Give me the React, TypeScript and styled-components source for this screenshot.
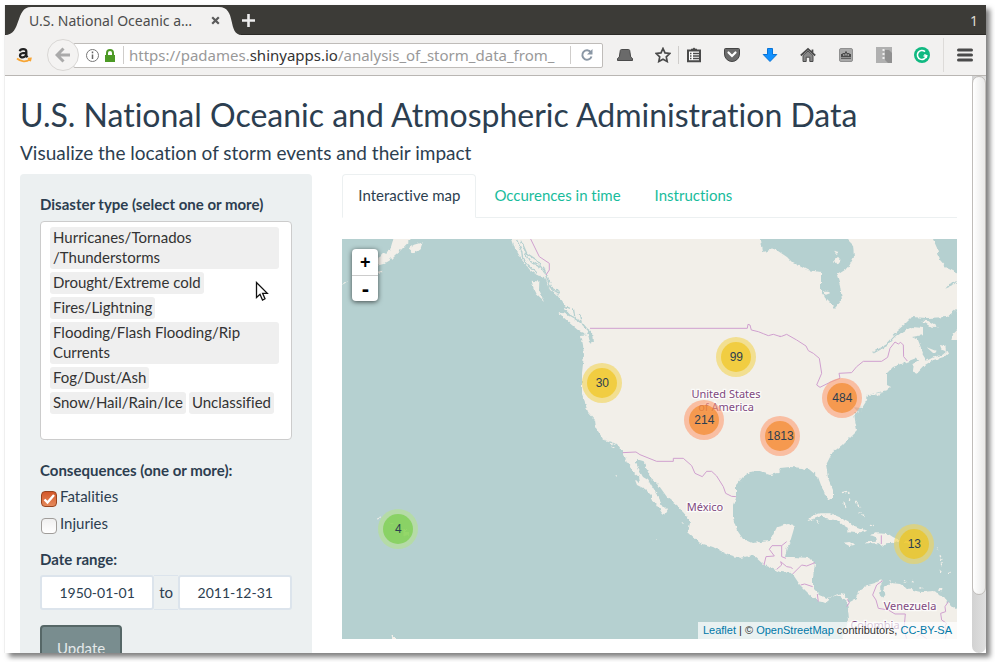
import React, { useState } from "react";
import styled, { createGlobalStyle, css } from "styled-components";

const GlobalStyle = createGlobalStyle`
  * { box-sizing: border-box; }
  body { margin: 0; background: #fff; color: #2c3e50; font: 15px/21px Lato, sans-serif; font-variant-ligatures: none; overflow: hidden; }
  button, input { font: inherit; color: inherit; margin: 0; }
`;

/* ---------- browser frame ---------- */

const Desktop = styled.div`
  display: flex;
  height: 100vh;
  padding: 5px 9px 9px 5px;
`;

const BrowserWindow = styled.div`
  display: flex;
  flex-direction: column;
  flex: 1;
  min-width: 0;
  background: #fff;
  box-shadow: 4px 4px 5px rgba(0, 0, 0, 0.5), -1px 0 0 #f4f4f4;
`;

const TitleBar = styled.header`
  display: flex;
  align-items: stretch;
  height: 30px;
  flex: none;
  background: #3c3b37;
  border-bottom: 1px solid #2b2a27;
  font-family: "Noto Sans", sans-serif;
`;

const BrowserTab = styled.div`
  position: relative;
  display: flex;
  align-items: center;
  width: 237px;
  padding: 2px 22px 0 24px;
  font-size: 14px;
  color: #4c4c4c;
`;

const TabShape = styled.svg`
  position: absolute;
  left: 0;
  top: 0;
`;

const TabTitle = styled.span`
  position: relative;
  flex: 1;
  white-space: nowrap;
`;

const PlainButton = styled.button`
  position: relative;
  display: flex;
  align-items: center;
  justify-content: center;
  padding: 0;
  border: 0;
  background: none;
`;

const TabCount = styled.span`
  margin-left: auto;
  padding: 5px 8px 0 0;
  color: #dfdbd2;
  font-size: 14px;
`;

const Toolbar = styled.nav`
  display: flex;
  align-items: center;
  flex: none;
  height: 41px;
  padding: 0 13px 0 11px;
  background: #f2f1f0;
  border-bottom: 1px solid #b9b6b3;
`;

const BackButton = styled(PlainButton)`
  z-index: 1;
  width: 32px;
  height: 32px;
  margin: 0 -6px 0 15px;
  border: 1px solid #d9d7d5;
  border-radius: 50%;
  background: #f4f3f2;
`;

const AddressBar = styled.div`
  display: flex;
  align-items: center;
  flex: 1;
  min-width: 0;
  height: 25px;
  padding: 0 8px 0 12px;
  background: #fff;
  border: 1px solid #bfbcb9;
  border-radius: 2px;
  font-family: "Noto Sans", sans-serif;
`;

const Url = styled.span`
  flex: 1;
  min-width: 0;
  overflow: hidden;
  white-space: nowrap;
  color: #999;
`;

const UrlHost = styled.span`
  color: #333;
`;

const Divider = styled.span<{ $tall?: boolean; $gap: number }>`
  flex: none;
  width: 1px;
  height: ${(p) => (p.$tall ? 34 : 18)}px;
  margin: 0 ${(p) => p.$gap}px;
  background: ${(p) => (p.$tall ? "#dddbd9" : "#cfcdcb")};
`;

const IconGroup = styled.div<{ $first?: boolean }>`
  display: flex;
  align-items: center;
  gap: 22px;
  margin-left: ${(p) => (p.$first ? 14 : 0)}px;
`;

const Viewport = styled.div`
  display: flex;
  flex: 1;
  min-height: 0;
`;

const ScrollTrack = styled.div`
  width: 14px;
  flex: none;
  background: linear-gradient(90deg, #d2d2d2, #e0e0e0);
  border-radius: 0 0 7px 7px;
`;

const ScrollThumb = styled.div`
  height: 90%;
  border: 1px solid #c0bdba;
  border-radius: 7px;
  background: linear-gradient(90deg, #fff, #e9e9e8);
`;

/* ---------- page ---------- */

const Page = styled.main`
  flex: 1;
  min-width: 0;
  overflow: hidden;
`;

const Title = styled.h2`
  margin: 21px 15px 10px;
  font-size: 32px;
  line-height: 35px;
  font-weight: 400;
`;

const Subtitle = styled.h4`
  margin: 0 15px 11px;
  font-size: 19px;
  line-height: 21px;
  font-weight: 400;
`;

const Columns = styled.div`
  display: grid;
  grid-template-columns: minmax(0, 1fr) minmax(0, 2fr);
`;

const Column = styled.section`
  padding: 0 15px;
`;

const Well = styled.form`
  padding: 20px;
  background: #ecf0f1;
  border-radius: 4px;
`;

const fieldTitle = css`
  display: block;
  padding: 0;
  font-weight: 700;
  line-height: 21px;
`;

const FieldLabel = styled.label`
  ${fieldTitle}
`;

const FieldLegend = styled.legend`
  ${fieldTitle}
  margin-bottom: 5px;
`;

const ChipBox = styled.div`
  display: flex;
  flex-wrap: wrap;
  gap: 3px;
  margin: 6px 0 20px;
  padding: 5px 12px 4px 9px;
  background: #fff;
  border: 1px solid #ccc;
  border-radius: 4px;
`;

const Chip = styled.span`
  max-width: 100%;
  padding: 0 3px 2px;
  line-height: 20px;
  color: #333;
  background: #efefef;
  border-radius: 3px;
`;

const ChipInput = styled.input`
  width: 100%;
  height: 18px;
  padding: 0;
  border: 0;
  outline: 0;
  background: none;
`;

const CheckGroup = styled.fieldset`
  display: flex;
  flex-direction: column;
  gap: 6px;
  margin: 0 0 15px;
  padding: 0;
  border: 0;
`;

const CheckLabel = styled.label`
  display: flex;
  gap: 3px;
  padding-left: 1px;
  height: 21px;
`;

const CheckBox = styled.input`
  appearance: none;
  width: 16px;
  height: 16px;
  margin-top: 5px;
  border: 1px solid #a09d9a;
  border-radius: 4px;
  background: linear-gradient(#f0f0f0, #fff);

  &:checked {
    border-color: #98441f;
    background:
      url("data:image/svg+xml,%3Csvg xmlns='http://www.w3.org/2000/svg' viewBox='0 0 14 14'%3E%3Cpath d='M2.5 7.5 5.5 10.5 12 3' fill='none' stroke='white' stroke-width='2.4'/%3E%3C/svg%3E"),
      linear-gradient(#d3582a, #e58a5c);
  }
`;

const DateRange = styled.div`
  display: flex;
  margin: 5px 0 15px;
`;

const DateInput = styled.input`
  flex: 1;
  min-width: 0;
  height: 35px;
  padding: 0 9px;
  border: 2px solid #dce4ec;
  border-radius: 3px;
  background: #fff;
  font-size: 14px;
  text-align: center;
`;

const DateJoin = styled.span`
  width: 24px;
  line-height: 33px;
  text-align: center;
  border: solid #dce4ec;
  border-width: 1px 0;
`;

const UpdateButton = styled.button`
  padding: 11px 15px;
  border: 2px solid #566767;
  border-radius: 4px;
  background: #798d8f;
  color: #e4e8e9;
  line-height: 21px;
`;

const TabList = styled.div`
  display: flex;
  gap: 2px;
  margin-bottom: 21px;
  border-bottom: 1px solid #ecf0f1;
`;

const PageTab = styled.button<{ $active: boolean }>`
  margin-bottom: -1px;
  padding: 10px 15px 11px;
  border: 1px solid ${(p) => (p.$active ? "#ecf0f1" : "transparent")};
  border-bottom-color: ${(p) => (p.$active ? "#fff" : "transparent")};
  border-radius: 4px 4px 0 0;
  background: ${(p) => (p.$active ? "#fff" : "none")};
  color: ${(p) => (p.$active ? "#2c3e50" : "#18bc9c")};
  line-height: 21px;
`;

/* ---------- map ---------- */

const MapFrame = styled.div`
  position: relative;
  height: 400px;
  overflow: hidden;
  background: #b5d0d0;
  font-family: "Liberation Sans", sans-serif;
`;

const MapCanvas = styled.svg`
  display: block;
  width: 100%;
  height: 100%;
`;

const ZoomControl = styled.div`
  position: absolute;
  left: 10px;
  top: 10px;
  width: 26px;
  border-radius: 4px;
  background: #fff;
  box-shadow: 0 1px 5px rgba(0, 0, 0, 0.65);
`;

const ZoomButton = styled.button`
  display: block;
  width: 26px;
  height: 26px;
  padding: 0;
  border: 0;
  background: none;
  color: #000;
  font: bold 18px/26px "Liberation Sans", sans-serif;

  & + & {
    border-top: 1px solid #ccc;
    font-size: 22px;
    line-height: 24px;
  }
`;

const clusterTones = {
  small: ["rgba(181, 226, 140, 0.6)", "rgba(110, 204, 57, 0.6)"],
  medium: ["rgba(241, 211, 87, 0.6)", "rgba(240, 194, 12, 0.6)"],
  large: ["rgba(253, 156, 115, 0.6)", "rgba(241, 128, 23, 0.6)"],
};

type Tone = keyof typeof clusterTones;

const Cluster = styled.button<{ $x: number; $y: number; $tone: Tone }>`
  position: absolute;
  left: ${(p) => p.$x}px;
  top: ${(p) => p.$y}px;
  width: 40px;
  height: 40px;
  margin: -20px 0 0 -20px;
  padding: 5px;
  border: 0;
  border-radius: 50%;
  background: ${(p) => clusterTones[p.$tone][0]};
  font: 12px/30px "Liberation Sans", sans-serif;
`;

const ClusterCore = styled.span<{ $tone: Tone }>`
  display: flex;
  justify-content: center;
  height: 30px;
  border-radius: 50%;
  background: ${(p) => clusterTones[p.$tone][1]};
`;

const Attribution = styled.div`
  position: absolute;
  right: 0;
  bottom: 0;
  padding: 0 5px;
  background: rgba(255, 255, 255, 0.7);
  color: #333;
  font-size: 11px;
  line-height: 17px;
  white-space: nowrap;

  a { color: #0078a8; text-decoration: none; }
`;

const Pointer = styled.svg`
  position: absolute;
  left: 255px;
  top: 281px;
  pointer-events: none;
`;

const clusters: { count: number; x: number; y: number; tone: Tone }[] = [
  { count: 99, x: 394, y: 118, tone: "medium" },
  { count: 30, x: 260, y: 144, tone: "medium" },
  { count: 484, x: 500, y: 159, tone: "large" },
  { count: 214, x: 362, y: 181, tone: "large" },
  { count: 1813, x: 438, y: 197, tone: "large" },
  { count: 4, x: 56, y: 290, tone: "small" },
  { count: 13, x: 572, y: 305, tone: "medium" },
];

const disasterTypes = [
  "Hurricanes/Tornados /Thunderstorms",
  "Drought/Extreme cold",
  "Fires/Lightning",
  "Flooding/Flash Flooding/Rip Currents",
  "Fog/Dust/Ash",
  "Snow/Hail/Rain/Ice",
  "Unclassified",
];

const mainland =
  "M165 -10 170 0 173 9 180 21 188 31 195 36 203 38 206 46 208 51 215 56 220 63 223 69 231 78 240 83 245 89 250 93 251 103 248 101 246 95 239 96 241 106 242 116 240 134 240 144 240 156 243 164 246 173 253 181 254 189 261 200 270 203 276 206 281 213 285 223 291 233 297 238 298 244 293 241 295 246 303 250 309 256 309 261 315 266 320 274 322 276 325 271 320 266 315 256 310 248 306 241 301 238 297 231 294 224 294 220 301 222 304 228 308 238 315 244 320 251 325 258 335 266 345 278 348 284 346 293 358 304 371 308 385 315 398 319 411 316 421 325 431 330 438 333 450 334 458 346 466 354 475 362 485 364 486 359 496 356 505 363 506 371 507 381 503 391 501 400 499 410 625 410 625 376 615 371 605 363 600 356 591 352 580 353 575 352 565 349 558 345 550 344 542 348 541 354 538 349 541 341 533 344 526 346 518 351 515 359 508 363 500 354 493 356 485 359 478 356 471 349 471 338 473 324 468 319 451 318 443 318 445 309 448 303 451 293 453 286 446 285 435 288 432 294 428 302 410 304 401 300 395 291 391 279 391 266 394 258 394 246 401 238 408 233 416 232 428 236 436 234 438 229 448 228 460 229 468 231 476 238 479 246 483 256 488 262 491 259 491 251 486 239 484 226 490 214 500 206 508 198 515 191 513 181 512 173 518 176 520 169 525 161 526 156 545 151 549 148 545 146 545 134 551 128 565 123 578 118 581 114 576 101 570 98 581 96 581 89 570 88 556 95 546 106 558 91 565 83 570 78 585 79 605 78 615 70 625 62 625 38 615 34 605 29 598 21 595 9 591 0 588 -10Z";

const hudsonBay =
  "M418 -10 419 0 421 13 433 10 445 18 450 23 465 31 479 33 479 53 485 61 493 69 500 61 498 46 495 36 506 29 512 18 511 6 505 0 500 -10Z";

/* Tile sheets: each is drawn on a grid three units to a pixel. */
const westSheet = "translate(-2 -9) scale(.3333)";
const plainsSheet = "translate(198 -9) scale(.3333)";
const eastSheet = "translate(418 -9) scale(.3333)";
const mexicoSheet = "translate(198 191) scale(.3333)";
const caribbeanSheet = "translate(418 191) scale(.3333)";

function Basemap() {
  return (
    <MapCanvas viewBox="0 0 615 400" preserveAspectRatio="xMinYMin slice" role="img" aria-label="Map of North America">
      <defs>
        <filter id="coast" filterUnits="userSpaceOnUse" x="-10" y="-10" width="635" height="420" colorInterpolationFilters="sRGB">
          <feTurbulence type="fractalNoise" baseFrequency=".22" numOctaves="2" seed="4" result="n" />
          <feDisplacementMap in="SourceGraphic" in2="n" scale="4" xChannelSelector="R" yChannelSelector="G" />
        </filter>
      </defs>
      <g filter="url(#coast)" fill="#f2efe9">
        <rect x="-10" y="-10" width="635" height="420" fill="#b5d0d0" />
        <path d={mainland} />
        <path d={hudsonBay} fill="#b5d0d0" />
        <g transform={westSheet}>
          <path d="M172 5H235L216 27 200 42 183 60 165 75 148 92 130 102 112 107 115 80 150 60 160 27ZM206 55 222 44 248 37 242 55 222 70ZM575 152 598 155 597 182 612 213 590 192 580 172ZM5 165 15 155 25 150 15 160ZM108 125 128 122 120 132ZM656 248 660 246V254Z" />
          <path d="M530 30 545 62 548 85 565 105 592 130M545 35 560 70 590 90 615 130M555 68 565 90 600 112M620 145 635 178 655 192" fill="none" stroke="#b5d0d0" strokeWidth="4" />
        </g>
        <g transform={plainsSheet}>
          <path d="M56 248 72 250 98 264 122 280 145 304 140 314 118 304 92 282Z" />
          <path d="M10 110 22 140 30 160M20 165 45 180M40 195 60 215M52 180 60 200M65 225 90 235M100 235 105 265M118 250 124 280M148 300 152 340" fill="none" stroke="#b5d0d0" strokeWidth="4" />
          <path d="M188 628 206 632M210 640 220 642M214 650 224 654" stroke="#f2efe9" strokeWidth="3" />
        </g>
        <g transform={eastSheet}>
          <path d="M458 402 480 390 500 392 520 382 548 374 562 362 566 368 552 382 520 390 496 404 472 430 456 424ZM482 364 500 392 484 396 470 386ZM484 272 505 273 534 291 512 290ZM540 345 556 348 558 360 544 356ZM500 352 530 364 520 370ZM574 330 580 312 600 292V330ZM188 182 205 182 210 190 198 194ZM222 92 234 80 242 90 230 104ZM222 62 236 66 230 72ZM325 494 372 486 350 496Z" />
          <path d="M430 300 402 322 380 346 340 368M448 275 420 298 400 316" fill="none" stroke="#b5d0d0" strokeWidth="5" />
          <path d="M556 176 568 162 592 152 580 166ZM284 532 296 545 290 560 304 556 306 534Z" fill="#b5d0d0" />
        </g>
        <g transform={caribbeanSheet}>
          <path d="M142 274 158 256 182 250 210 250 236 260 262 272 284 288 322 302 302 310 262 307 268 296 250 286 230 270 200 268 184 258 160 268ZM330 314 350 310 385 312 400 322 418 330 402 338 378 340 368 350 356 340 316 340 318 334 348 332 345 320ZM250 338 268 336 286 344 268 348ZM435 332 462 332 460 342 436 342ZM168 274 178 274 176 282ZM250 212 258 228 260 238 252 228ZM538 474 548 474 546 484 534 482Z" />
          <path d="M246 188 262 184 270 192M268 205 270 215M286 216 300 232M296 248 314 260M330 290 342 286M532 350 536 362M540 376 546 390M544 400 546 412M540 422 546 430M566 430 572 430M388 452 392 454M430 454 440 458M456 454 464 458M478 474 490 474" fill="none" stroke="#f2efe9" strokeWidth="4" strokeDasharray="6 4" />
          <path d="M366 476 374 484 376 496 366 502 358 494Z" fill="#b5d0d0" />
        </g>
        <g transform={mexicoSheet}>
          <path d="M226 136 231 136 230 141ZM350 328 354 332 349 332ZM424 278 432 276 430 282Z" />
        </g>
        <path d="M35 280 39 279M48 283 51 284M62 290 67 295 62 298ZM50 396 54 400H51Z" stroke="#f2efe9" />
      </g>
      <g fill="none" stroke="#d0a0cf" strokeWidth="3">
        <path transform={westSheet} d="M572 27 598 80 628 100V120L618 135" />
        <path transform={plainsSheet} d="M150 295H622L624 283 630 285 634 300 655 305 670 311 685 317 700 313 722 320" />
        <path transform={eastSheet} d="M58 319 65 319 80 313 110 330 138 348 145 362 160 370 178 385 185 430 170 465 180 472 210 457 240 445 237 430 275 428 290 410 310 394H365L383 382 390 355 405 336 415 342 422 337 430 345 431 380 442 393" />
        <path transform={mexicoSheet} d="M248 68 288 66 300 74 350 94H400V85H430L455 107 465 130 487 140 500 124H515L530 138 550 170 557 190 575 199 588 200" />
        <g transform={caribbeanSheet}>
          <path d="M12 405 18 380 43 378 28 358 36 347H65V380L78 385M65 347 80 335M50 418 65 405 62 395 80 410 92 412 98 416M98 432 125 405 140 408 165 398M122 465 134 462 158 470M172 492 175 515M262 508 268 518 260 530M364 316V342" />
          <path d="M368 452 350 465 338 495 348 510 355 535 385 540 405 552H436L432 600 440 626M565 515 555 530 557 545 542 550 545 570 560 580 555 590 560 610 556 626M470 620 480 612 500 626" />
        </g>
      </g>
      <g
        fill="#80487f"
        stroke="#fff"
        strokeWidth="2.5"
        strokeOpacity=".75"
        paintOrder="stroke"
        textAnchor="middle"
        fontFamily="Noto Sans, sans-serif"
        fontSize="11"
      >
        <text x="384" y="159">United States</text>
        <text x="384" y="172">of America</text>
        <text x="363" y="272">México</text>
        <text x="568" y="371">Venezuela</text>
        <text x="533" y="390">Colombia</text>
      </g>
    </MapCanvas>
  );
}

/* ---------- toolbar icons ---------- */

const iconPaths: Record<string, React.ReactNode> = {
  Privacy: <path d="M4.500 2.500h7q1 0 1.200 1l1 6.500 1.800 1.500v2H.5v-2L2.300 10l1-6.500q.2-1 1.200-1Z" fill="#6a6a6a" stroke="#4a4a4a" />,
  Bookmark: <path d="m8 1.500 2 4.400 4.800.6-3.500 3.300.9 4.700L8 12.200l-4.200 2.300.9-4.700L1.200 6.500 6 5.900Z" fill="none" stroke="#4a4a4a" strokeWidth="1.700" />,
  Library: (
    <>
      <path d="M2 3.500h12v10.700H2Z" fill="#fff" stroke="#4a4a4a" strokeWidth="2" />
      <path d="M5 4V1.800h1.500L8 .5l1.500 1.300H11V4Z" fill="#4a4a4a" />
      <path d="M4 6.500h1.500M7 6.500h6M4 9h1.500M7 9h6M4 11.500h1.500M7 11.500h6" stroke="#4a4a4a" strokeWidth="1.300" />
    </>
  ),
  Pocket: (
    <>
      <path d="M1.500 1.500h13q1 0 1 1V7a7.500 7.500 0 0 1-15 0V2.500q0-1 1-1Z" fill="#6a6a6a" stroke="#444" />
      <path d="m4.500 5.500 3.500 3.500 3.500-3.500" fill="none" stroke="#fff" strokeWidth="2.200" strokeLinecap="round" />
    </>
  ),
  Downloads: <path d="M5.500 1.500h5v6h4.300L8 14.500 1.200 7.500h4.300Z" fill="#1191ff" stroke="#0873d6" />,
  Home: (
    <>
      <path d="M3 8.500 8 4l5 4.500v6H9.800v-4.300H6.200v4.300H3Z" fill="#888" stroke="#4a4a4a" />
      <path d="M.8 8.500 8 2l7.200 6.500M12.500 2.500v3" fill="none" stroke="#4a4a4a" strokeWidth="1.700" />
    </>
  ),
  Capture: (
    <>
      <rect x="1.500" y="1.500" width="13" height="13" rx="1.500" fill="#a8a8a8" stroke="#909090" />
      <path d="M7 4.500h2V6h2.500v1H13v3H3V7h1.500V6H7ZM3 10.800h10v1H3Z" fill="#4a4a4a" />
      <path d="M5 8h1.500M9.500 8H11M8 6.500v2" stroke="#ddd" />
    </>
  ),
  Archive: (
    <>
      <path d="M0 0h16v16H0Z" fill="#b0b0b0" />
      <path d="M9 3h4l3 3v10h-4l-3-3Z" fill="#909090" />
      <path d="M7.500 2v12" stroke="#eee" strokeWidth="2" strokeDasharray="2 2" />
    </>
  ),
  Grammar: (
    <>
      <circle cx="8" cy="8" r="8" fill="#10b981" />
      <path d="M11 4.700A4.500 4.500 0 1 0 12.300 9H9.500" fill="none" stroke="#fff" strokeWidth="1.600" />
      <path d="m10.300 7.500 2.500 1.200-.5 2.500" fill="none" stroke="#fff" strokeWidth="1.300" />
    </>
  ),
  Menu: <path d="M1.500 3h13M1.500 8h13M1.500 13h13" stroke="#4a4a4a" strokeWidth="3" strokeLinecap="round" />,
};

function ToolIcon({ name }: { name: string }) {
  return (
    <PlainButton aria-label={name}>
      <svg width="16" height="16" viewBox="0 0 16 16">{iconPaths[name]}</svg>
    </PlainButton>
  );
}

export default function App() {
  const [tab, setTab] = useState("Interactive map");
  return (
    <Desktop>
      <GlobalStyle />
      <BrowserWindow>
        <TitleBar>
          <BrowserTab>
            <TabShape width="237" height="30" viewBox="0 0 237 30" aria-hidden="true">
              <path d="M0 30C17 30 10 2 26 2H214C232 2 222 30 237 30Z" fill="#f2f1f0" />
            </TabShape>
            <TabTitle>U.S. National Oceanic a…</TabTitle>
            <PlainButton aria-label="Close tab">
              <svg width="9" height="9" viewBox="0 0 9 9">
                <path d="m1.200 1.200 6.600 6.600M7.800 1.200 1.200 7.800" stroke="#5a5a5a" strokeWidth="2.200" />
              </svg>
            </PlainButton>
          </BrowserTab>
          <PlainButton aria-label="New tab">
            <svg width="13" height="15" viewBox="0 0 13 15">
              <path d="M6.500 2v13M0 8.500h13" stroke="#eee" strokeWidth="2.600" />
            </svg>
          </PlainButton>
          <TabCount>1</TabCount>
        </TitleBar>

        <Toolbar>
          <PlainButton aria-label="Amazon">
            <svg width="16" height="18" viewBox="0 0 16 18">
              <path d="M3.800 5.300C4.300 2.300 10.300 2.300 10.300 5.500V9.800L11.500 11.300M10 6.900C5.800 6.900 4 8 4 9.500 4 12.300 9.300 12 10.200 8.500" fill="none" stroke="#222" strokeWidth="2.300" />
              <path d="M1 12.500c4 3.600 9.500 3.600 13 .8M11.800 12.500l3-.2-.7 3" fill="none" stroke="#f7a535" strokeWidth="1.700" />
            </svg>
          </PlainButton>
          <BackButton aria-label="Back">
            <svg width="16" height="16" viewBox="0 0 16 16">
              <path d="M8.500 1.500 2 8l6.500 6.500M2.500 8H15" fill="none" stroke="#aaa" strokeWidth="3" />
            </svg>
          </BackButton>
          <AddressBar>
            <svg width="32" height="15" viewBox="0 0 32 15" aria-hidden="true">
              <circle cx="6.500" cy="7.500" r="6" fill="none" stroke="#777" />
              <path d="M6.500 6.500v4.500M6.500 3.500v1.700" stroke="#666" strokeWidth="1.500" />
              <path d="M19 7h10v7H19Z" fill="#4d9a26" />
              <path d="M21 8V5a3 3 0 0 1 6 0v3" fill="none" stroke="#4d9a26" strokeWidth="2" />
            </svg>
            <Divider $gap={5} />
            <Url>
              https://padames.<UrlHost>shinyapps.io</UrlHost>/analysis_of_storm_data_from_
            </Url>
            <Divider $gap={9} />
            <PlainButton aria-label="Reload">
              <svg width="14" height="14" viewBox="0 0 14 14">
                <path d="M10.800 4.200A4.700 4.700 0 1 0 11.500 8.500" fill="none" stroke="#8a97a5" strokeWidth="2" />
                <path d="M12.500 1v5.500H7Z" fill="#8a97a5" />
              </svg>
            </PlainButton>
          </AddressBar>
          <IconGroup $first>
            <ToolIcon name="Privacy" />
            <ToolIcon name="Bookmark" />
          </IconGroup>
          <Divider $gap={7} />
          <IconGroup>
            {["Library", "Pocket", "Downloads", "Home", "Capture", "Archive", "Grammar"].map((n) => (
              <ToolIcon key={n} name={n} />
            ))}
          </IconGroup>
          <Divider $tall $gap={13} />
          <ToolIcon name="Menu" />
        </Toolbar>

        <Viewport>
          <Page>
            <Title>U.S. National Oceanic and Atmospheric Administration Data</Title>
            <Subtitle>Visualize the location of storm events and their impact</Subtitle>
            <Columns>
              <Column>
                <Well onSubmit={(e) => e.preventDefault()}>
                  <FieldLabel htmlFor="disaster">Disaster type (select one or more)</FieldLabel>
                  <ChipBox>
                    {disasterTypes.map((d) => (
                      <Chip key={d}>{d}</Chip>
                    ))}
                    <ChipInput id="disaster" type="text" />
                  </ChipBox>
                  <CheckGroup>
                    <FieldLegend>Consequences (one or more):</FieldLegend>
                    <CheckLabel>
                      <CheckBox type="checkbox" defaultChecked />
                      Fatalities
                    </CheckLabel>
                    <CheckLabel>
                      <CheckBox type="checkbox" />
                      Injuries
                    </CheckLabel>
                  </CheckGroup>
                  <FieldLabel htmlFor="start">Date range:</FieldLabel>
                  <DateRange>
                    <DateInput id="start" type="text" defaultValue="1950-01-01" />
                    <DateJoin>to</DateJoin>
                    <DateInput type="text" aria-label="End date" defaultValue="2011-12-31" />
                  </DateRange>
                  <UpdateButton type="submit">Update</UpdateButton>
                </Well>
              </Column>
              <Column>
                <TabList role="tablist">
                  {["Interactive map", "Occurences in time", "Instructions"].map((t) => (
                    <PageTab key={t} role="tab" aria-selected={t === tab} $active={t === tab} onClick={() => setTab(t)}>
                      {t}
                    </PageTab>
                  ))}
                </TabList>
                <MapFrame>
                  <Basemap />
                  {clusters.map((c) => (
                    <Cluster key={c.count} $x={c.x} $y={c.y} $tone={c.tone}>
                      <ClusterCore $tone={c.tone}>{c.count}</ClusterCore>
                    </Cluster>
                  ))}
                  <ZoomControl>
                    <ZoomButton aria-label="Zoom in">+</ZoomButton>
                    <ZoomButton aria-label="Zoom out">-</ZoomButton>
                  </ZoomControl>
                  <Attribution>
                    <a href="#leaflet">Leaflet</a> | © <a href="#osm">OpenStreetMap</a> contributors,{" "}
                    <a href="#license">CC-BY-SA</a>
                  </Attribution>
                </MapFrame>
              </Column>
            </Columns>
          </Page>
          <ScrollTrack aria-hidden="true">
            <ScrollThumb />
          </ScrollTrack>
        </Viewport>
      </BrowserWindow>
      <Pointer width="14" height="21" viewBox="0 0 14 21" aria-hidden="true">
        <path d="M1.500 1.500V16.500L5 13.300 7.500 19 10 17.800 7.600 12.300H12.300Z" fill="#fff" stroke="#111" strokeWidth="1.300" />
      </Pointer>
    </Desktop>
  );
}
